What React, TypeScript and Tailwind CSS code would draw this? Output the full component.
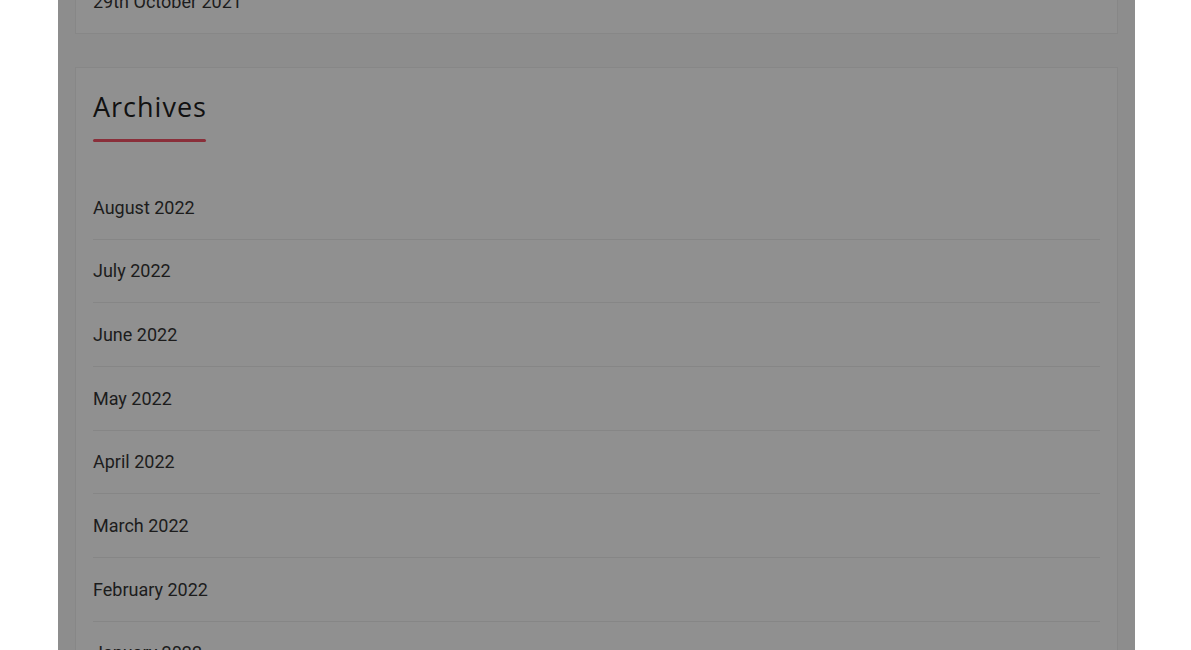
import React from "react";

const archives = [
  "August 2022",
  "July 2022",
  "June 2022",
  "May 2022",
  "April 2022",
  "March 2022",
  "February 2022",
  "January 2022",
];

const App: React.FC = () => {
  return (
    <div className="h-[650px] w-full overflow-hidden bg-white">
      <div className="ml-[58px] h-full w-[1077px] overflow-hidden bg-[#8d8d8d] pl-[17px] pr-[17px]">
        {/* previous widget, only its tail is on screen */}
        <div className="-mt-[41px] border border-[#878787] bg-[#909090] px-[17px] pt-[29px] pb-[18px]">
          <p className="font-['Roboto',sans-serif] text-[18px] leading-[26px] text-[#1c1c1c]">
            29th October 2021
          </p>
        </div>

        <div className="mt-[33px] border border-[#878787] bg-[#909090] px-[17px] pt-[20px]">
          <h2 className="font-['Open_Sans',sans-serif] text-[27px] leading-[38px] tracking-[1px] text-[#111]">
            Archives
          </h2>
          <div className="mt-[13px] h-[3px] w-[113px] rounded-full bg-[#8a2f3a]" />

          <ul className="mt-[34px]">
            {archives.map((month) => (
              <li
                key={month}
                className="flex h-[63.67px] items-center border-b border-[#868686] font-['Roboto',sans-serif] text-[18px] text-[#1c1c1c]"
              >
                {month}
              </li>
            ))}
          </ul>
        </div>
      </div>
    </div>
  );
};

export default App;
